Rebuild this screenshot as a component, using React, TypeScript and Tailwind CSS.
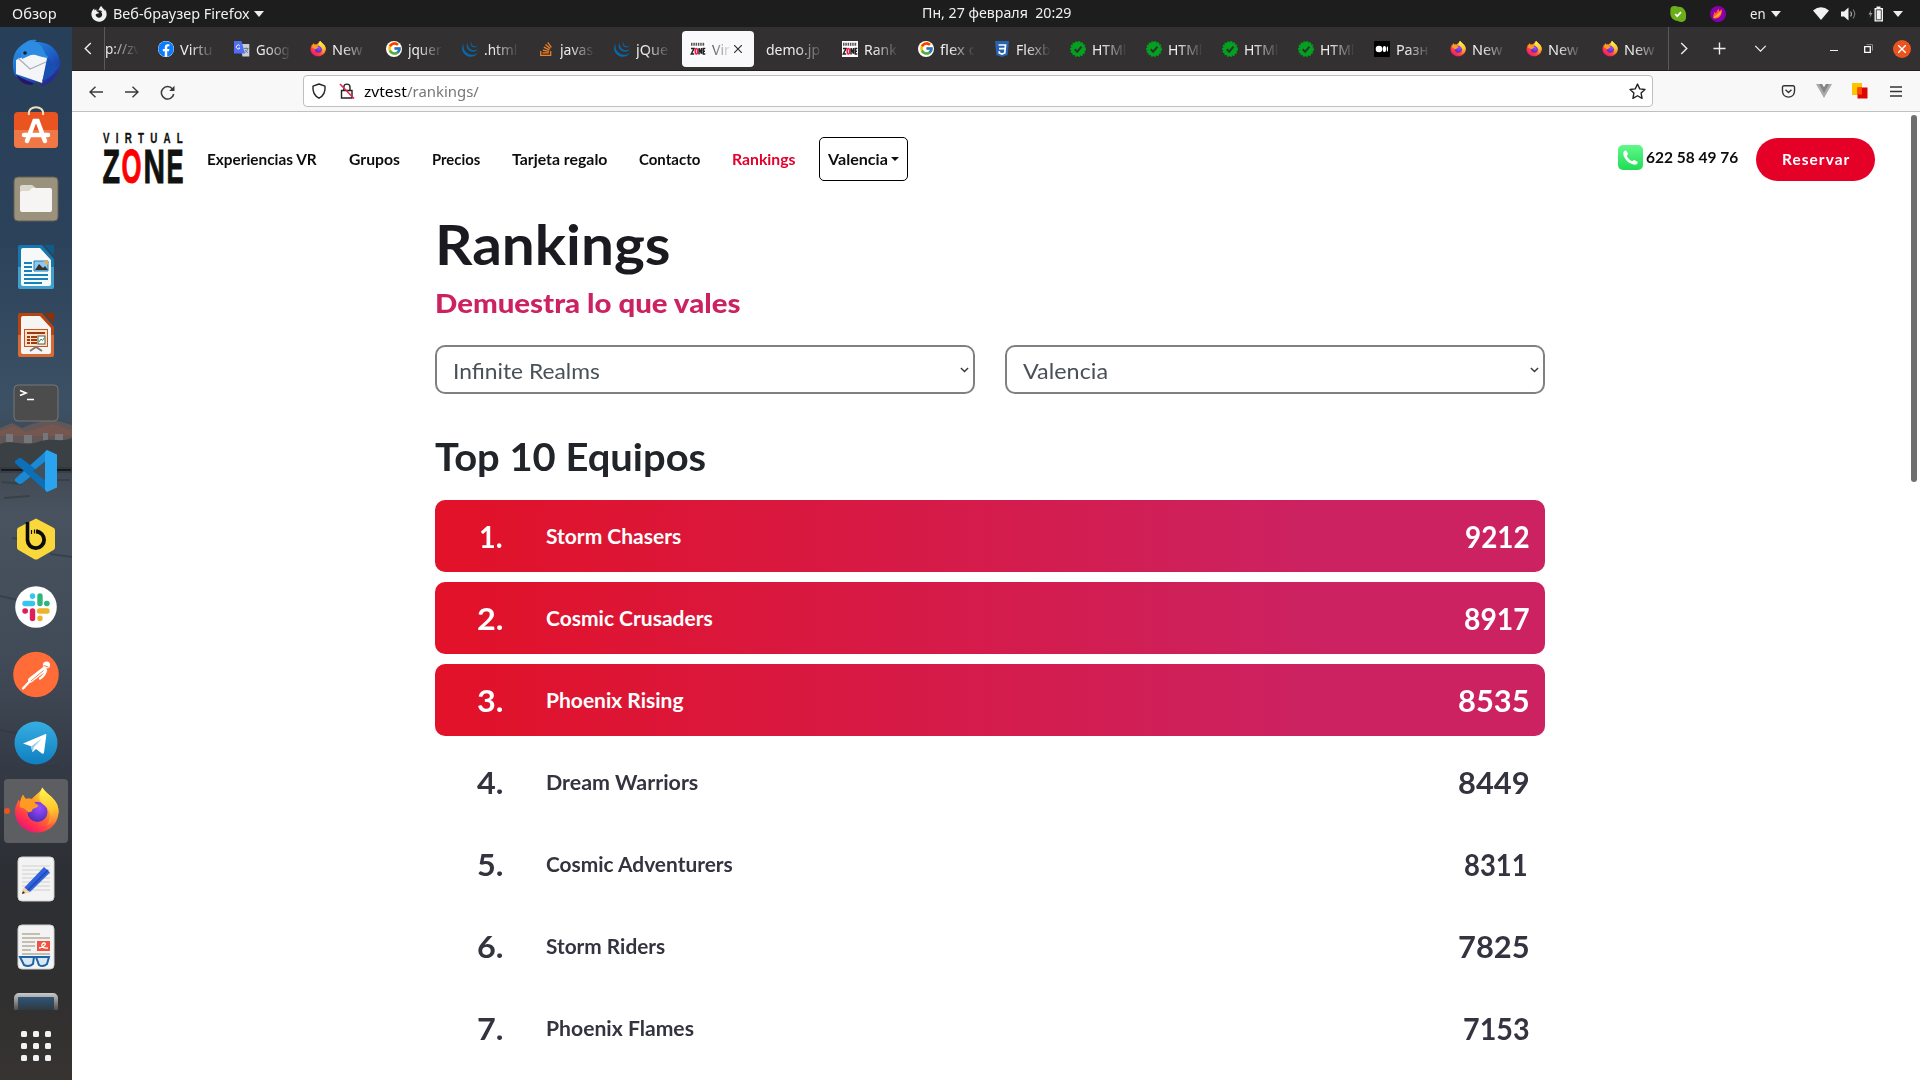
import React, { useLayoutEffect, useRef, useState } from "react";
import { FcGoogle } from "react-icons/fc";
import { FaFacebook, FaStackOverflow, FaFirefoxBrowser } from "react-icons/fa";
import { SiJquery } from "react-icons/si";

/** Text stretched horizontally so that it fills a given width. */
function Fit({ w, children, className = "" }: { w: number; children: React.ReactNode; className?: string }) {
  const ref = useRef<HTMLSpanElement>(null);
  const [k, setK] = useState(1);
  useLayoutEffect(() => {
    if (ref.current) setK(w / ref.current.offsetWidth);
  }, [w]);
  return (
    <span className={"inline-block shrink-0 whitespace-pre " + className} style={{ width: w }}>
      <span ref={ref} className="inline-block origin-left" style={{ transform: `scaleX(${k})` }}>
        {children}
      </span>
    </span>
  );
}

function Firefox({ className, id }: { className: string; id: string }) {
  return (
    <svg viewBox="0 0 48 48" className={className}>
      <defs>
        <linearGradient id={id + "a"} x1="0.85" y1="0.05" x2="0.2" y2="0.95">
          <stop offset="0" stopColor="#fff44f" />
          <stop offset="0.3" stopColor="#ffb42c" />
          <stop offset="0.55" stopColor="#ff6a2f" />
          <stop offset="0.8" stopColor="#ff2f50" />
          <stop offset="1" stopColor="#e5157a" />
        </linearGradient>
        <radialGradient id={id + "b"} cx="0.6" cy="0.3" r="0.75">
          <stop offset="0" stopColor="#9a4dff" />
          <stop offset="1" stopColor="#4a2bb8" />
        </radialGradient>
        <linearGradient id={id + "c"} x1="0.5" y1="0" x2="0.6" y2="1">
          <stop offset="0" stopColor="#fff44f" />
          <stop offset="0.6" stopColor="#ffc52e" />
          <stop offset="1" stopColor="#ff7139" />
        </linearGradient>
      </defs>
      <path d="M10 8c1 2 1.500 3 3 4.500 2-.5 4-.5 6 0C23 8 28 6 30 .5c2 3 4 5 7 7.500 6 5 10 10 10 17.500C47 38 37 47.500 24.500 47.500S1.500 38 1.500 25.500c0-3 .8-6 2-8 .5-2 1-3 2-4.500l1 3c1-3 2-6 3.500-8z" fill={`url(#${id}a)`} />
      <circle cx="25" cy="26" r="10.500" fill={`url(#${id}b)`} />
      <path d="M30 .5c2 3 4 5 7 7.500 6 5 10 10 10 17.500C46 34 40 39 35 40c3-5 4.500-13 0-18-3-4-8-5-8-11 0-4 2-7 3-10.500z" fill={`url(#${id}c)`} />
      <path d="M10 8c1 2 1.500 3 3 4.500 4-1 8 1 9.500 4.500 1.500 1 3 1.500 3.500 2.500-1 2-4 2.500-6 3.500 0 2-2 3.500-4.500 3.500-3-3-5-5-9-5 0-5 1-10 3.500-13.500z" fill="#ff9a23" />
    </svg>
  );
}

function ZoneFavicon() {
  return (
    <svg viewBox="0 0 16 16" className="size-4">
      <rect width="16" height="16" fill="#fff" />
      <path d="M1 2.500h14M1 4h14" stroke="#555" strokeWidth="1.300" strokeDasharray="1.500 .8" />
      <path d="M1 7.500h3L1.300 13h2.900M9 13.500V7.200l2.500 5.500V7M15.300 7.500h-2v5.500h2M13.500 10.200h1.500" stroke="#222" strokeWidth="1.500" fill="none" />
      <ellipse cx="6.400" cy="10.200" rx="1.200" ry="2.800" fill="none" stroke="#f0184a" strokeWidth="1.500" />
    </svg>
  );
}

function Check() {
  return (
    <svg viewBox="0 0 16 16" className="size-4">
      <circle cx="8" cy="8" r="7" fill="#04a01f" stroke="#04a01f" strokeWidth="1.800" strokeDasharray="2 1" />
      <path d="M4.700 8.300l2.500 2.400 4.300-5" stroke="#2b332c" strokeWidth="2" fill="none" />
    </svg>
  );
}

function Css3() {
  return (
    <svg viewBox="0 0 14 16" className="h-4 w-[14px]">
      <path d="M0 0h14l-1.300 14L7 16l-5.700-2z" fill="#2763b0" />
      <path d="M3.500 4h7l-.7 8L7 13l-2.700-1-.1-1.700M4 7.700h6" stroke="#fff" strokeWidth="1.700" fill="none" />
    </svg>
  );
}

function Translate() {
  return (
    <svg viewBox="0 0 16 16" className="size-4">
      <path d="M6 3h9.300v12.500H8.500z" fill="#c9cdd6" />
      <path d="M0 0h7.500L11 12.500H0z" fill="#4f6ef5" />
      <path d="M5.800 4.700A2 2 0 1 0 6 7H4.500" stroke="#fff" fill="none" strokeWidth=".9" />
      <path d="M10 7.500h4.500M12.200 6.500v1M13.700 7.700c-.5 2-1.700 3.300-3 4M11 9c.8 1.200 2 2 3 2.700" stroke="#64748b" fill="none" strokeWidth=".9" />
    </svg>
  );
}

function Medium() {
  return (
    <svg viewBox="0 0 16 16" className="size-4">
      <rect width="16" height="16" rx="1" fill="#000" />
      <circle cx="5" cy="8" r="3.300" fill="#fff" />
      <ellipse cx="10.400" cy="8" rx="1.700" ry="3.100" fill="#fff" />
      <ellipse cx="13.400" cy="8" rx=".7" ry="2.800" fill="#fff" />
    </svg>
  );
}

const jq = <SiJquery className="size-4 text-[#0769ad]" />;
const gg = (
  <span className="flex size-4 items-center justify-center rounded-full bg-white">
    <FcGoogle className="size-[15px]" />
  </span>
);

const tabs: { icon?: React.ReactNode; text: string; w: number; active?: boolean }[] = [
  { icon: <FaFacebook className="size-4 rounded-full bg-white text-[#0a7cff]" />, text: "Virtu", w: 33 },
  { icon: <Translate />, text: "Goog", w: 34 },
  { icon: <Firefox className="size-[17px]" id="t1" />, text: "New", w: 30 },
  { icon: gg, text: "jquer", w: 34 },
  { icon: jq, text: ".html", w: 33 },
  { icon: <FaStackOverflow className="size-4 text-[#f48024]" />, text: "javas", w: 33 },
  { icon: jq, text: "jQue", w: 32 },
  { icon: <ZoneFavicon />, text: "Vir", w: 18, active: true },
  { text: "demo.jp", w: 54 },
  { icon: <ZoneFavicon />, text: "Rank", w: 33 },
  { icon: gg, text: "flex c", w: 36 },
  { icon: <Css3 />, text: "Flexb", w: 35 },
  { icon: <Check />, text: "HTMl", w: 34 },
  { icon: <Check />, text: "HTMl", w: 34 },
  { icon: <Check />, text: "HTMl", w: 34 },
  { icon: <Check />, text: "HTMl", w: 34 },
  { icon: <Medium />, text: "Разн", w: 32 },
  { icon: <Firefox className="size-[17px]" id="t2" />, text: "New", w: 30 },
  { icon: <Firefox className="size-[17px]" id="t3" />, text: "New", w: 30 },
  { icon: <Firefox className="size-[17px]" id="t4" />, text: "New", w: 30 },
];

function Caret() {
  return (
    <svg viewBox="0 0 10 6" className="h-[6px] w-[10px] shrink-0">
      <path d="M0 0h10L5 6z" fill="#eee" />
    </svg>
  );
}

function TopBar() {
  return (
    <div className="flex h-[27px] shrink-0 items-center bg-[#1d1d1d] text-[14px] leading-[26px] text-[#f0f0f0]">
      <Fit w={45} className="ml-[12px]">Обзор</Fit>
      <FaFirefoxBrowser className="ml-[34px] size-4" />
      <Fit w={137} className="ml-[6px]">Веб-браузер Firefox</Fit>
      <span className="ml-[4px]"><Caret /></span>
      <Fit w={150} className="-mt-px ml-[658px]">Пн, 27 февраля  20:29</Fit>
      <svg viewBox="0 0 16 16" className="ml-[598px] size-4">
        <path d="M4.500 0C1 0 0 2 .5 5c-1 6 2.500 9.500 7.500 10C11 17 16 16 16 11.500 17 5 13 0 8 .8 7 .2 6 0 4.500 0z" fill="#6aae1a" />
        <path d="M5.200 8l2 2.200 3.800-4" stroke="#fff" strokeWidth="1.700" fill="none" />
      </svg>
      <svg viewBox="0 0 16 16" className="ml-[24px] size-4">
        <circle cx="8" cy="8" r="8" fill="#8a00a8" />
        <path d="M3 12c0-3 1-4 1.500-6.500l1.500 2C6.500 5.500 7.500 4 9 2.800v2.500l3-2c0 3.500-.5 6.200-2.500 7.700S5 13 3 12z" fill="#ff5a3c" />
        <path d="M4 12c1-3 3-3 4.500-5L11 5c.5 3-2 6-7 7z" fill="#ffb01f" />
      </svg>
      <Fit w={16} className="ml-[24px]">en</Fit>
      <span className="ml-[5px]"><Caret /></span>
      <svg viewBox="0 0 16 13" className="ml-[32px] h-[13px] w-4">
        <path d="M0 3.500Q8-3 16 3.500L8 13z" fill="#f2f2f2" />
      </svg>
      <svg viewBox="0 0 16 14" className="ml-[12px] h-[14px] w-4 shrink-0">
        <path d="M0 4.500h3L7.500.5v13L3 9.500H0z" fill="#f2f2f2" />
        <path d="M9.500 4.500q2 2.500 0 5" stroke="#aaa" fill="none" strokeWidth="1.200" />
        <path d="M12 2.500q3.500 4.500 0 9" stroke="#777" fill="none" strokeWidth="1.200" />
      </svg>
      <svg viewBox="0 0 16 16" className="ml-[11px] size-4 shrink-0">
        <path d="M3 4L.5 8.500h2L1.500 12l3-5h-2z" fill="#999" />
        <path d="M8.500 2V.5h4V2h2.500v13.500H6.500V2z" fill="#f2f2f2" />
        <path d="M8.300 3.800h5v10h-5z" fill="#f2f2f2" stroke="#1d1d1d" strokeWidth=".8" />
      </svg>
      <span className="ml-[9px]"><Caret /></span>
    </div>
  );
}

function TabStrip() {
  return (
    <div className="flex h-[44px] shrink-0 items-center border-b border-[#221f20] bg-[#333031] text-[14px] text-[#ededed]">
      <div className="flex h-full w-[33px] items-center border-r border-[#5c595a] pl-[12px]">
        <svg viewBox="0 0 8 14" className="h-[13px] w-[8px]"><path d="M7 1L1 7l6 6" stroke="#eee" strokeWidth="1.500" fill="none" /></svg>
      </div>
      <div className="flex w-[43px] overflow-hidden">
        <Fit w={35} className="[mask-image:linear-gradient(90deg,#000_5px,transparent_34px)]">p://zv</Fit>
      </div>
      {tabs.map((t, i) => (
        <div
          key={i}
          className={
            "mx-[2px] flex h-[36px] w-[72px] shrink-0 items-center overflow-hidden rounded-[4px] pl-[8px] " +
            (t.active ? "bg-[#f9f9fb] text-[#555]" : "")
          }
        >
          {t.icon && <span className="mr-[6px] flex w-4 shrink-0 justify-center">{t.icon}</span>}
          <Fit
            w={t.w}
            className={
              "pt-px " +
              (t.active
                ? "[mask-image:linear-gradient(90deg,#000_0px,transparent_20px)]"
                : t.icon
                ? "[mask-image:linear-gradient(90deg,#000_10px,transparent_35px)]"
                : "[mask-image:linear-gradient(90deg,#000_30px,transparent_58px)]")
            }
          >
            {t.text}
          </Fit>
          {t.active && (
            <svg viewBox="0 0 8 8" className="ml-[4px] size-[8px] shrink-0"><path d="M0 0l8 8M8 0L0 8" stroke="#333" strokeWidth="1.200" /></svg>
          )}
        </div>
      ))}
      <div className="flex h-full flex-1 items-center border-l border-[#5c595a] pl-[11px]">
        <svg viewBox="0 0 8 14" className="h-[13px] w-[8px]"><path d="M1 1l6 6-6 6" stroke="#eee" strokeWidth="1.500" fill="none" /></svg>
        <svg viewBox="0 0 14 14" className="ml-[25px] size-[13px]"><path d="M7 .5v13M.5 7h13" stroke="#eee" strokeWidth="1.500" fill="none" /></svg>
        <svg viewBox="0 0 14 8" className="ml-[28px] h-[7px] w-[13px]"><path d="M1 1l6 6 6-6" stroke="#eee" strokeWidth="1.500" fill="none" /></svg>
        <span className="mt-[4px] ml-[63px] h-[1.500px] w-[8px] bg-[#eee]" />
        <svg viewBox="0 0 9 9" className="ml-[26px] size-[9px]">
          <path d="M.7 2.700h5.600v5.600H.7z" stroke="#fff" strokeWidth="1.300" fill="none" />
          <path d="M2.500.6h6v6" stroke="#888" fill="none" />
        </svg>
        <span className="ml-[20px] flex size-[18px] items-center justify-center rounded-full bg-[#e95420]">
          <svg viewBox="0 0 8 8" className="size-[8px]"><path d="M0 0l8 8M8 0L0 8" stroke="#fff" strokeWidth="1.400" /></svg>
        </span>
      </div>
    </div>
  );
}

function Toolbar() {
  return (
    <div className="flex h-[41px] shrink-0 items-center border-b border-[#c0c0c0] bg-[#f8f8f8] pl-[17px]">
      <svg viewBox="0 0 14 12" className="mt-px h-[12px] w-[14px]"><path d="M14 6H1M6.500.7L1 6l5.500 5.300" stroke="#3a3a3a" strokeWidth="1.400" fill="none" /></svg>
      <svg viewBox="0 0 14 12" className="mt-px ml-[22px] h-[12px] w-[14px]"><path d="M0 6h13M7.500.7L13 6l-5.500 5.300" stroke="#3a3a3a" strokeWidth="1.400" fill="none" /></svg>
      <svg viewBox="0 0 15 15" className="mt-[2px] ml-[21px] size-[15px]">
        <path d="M12.500 4A6.200 6.200 0 1 0 13.700 9" stroke="#3a3a3a" strokeWidth="1.500" fill="none" />
        <path d="M14.500.8v5.200H9.200z" fill="#3a3a3a" />
      </svg>
      <div className="ml-[128px] flex h-[32px] w-[1350px] items-center rounded-[4px] border border-[#bfbfc0] bg-white pl-[7px] text-[14.500px]">
        <svg viewBox="0 0 16 16" className="size-4"><path d="M8 1l6 2.200c.5 5-1 9.300-6 12-5-2.700-6.500-7-6-12z" stroke="#222" strokeWidth="1.400" fill="none" strokeLinejoin="round" /></svg>
        <svg viewBox="0 0 16 16" className="ml-[12px] size-4">
          <path d="M2.500 7.500h10.500v7.500h-10.500zM4.800 7.500V4.200a3.100 3.100 0 0 1 6.200 0v3.300" stroke="#222" strokeWidth="1.400" fill="none" />
          <path d="M1 1l14 14.500" stroke="#e22850" strokeWidth="1.600" />
        </svg>
        <Fit w={43} className="ml-[9px] pt-[2px] text-black">zvtest</Fit>
        <Fit w={72} className="pt-[2px] text-[#777]">/rankings/</Fit>
        <svg viewBox="0 0 16 16" className="mr-[6px] ml-auto size-[17px]"><path d="M8 1l2.100 4.500 4.900.6-3.600 3.400.9 4.900L8 12l-4.300 2.400.9-4.900L1 6.100l4.900-.6z" stroke="#222" strokeWidth="1.300" fill="none" strokeLinejoin="round" /></svg>
      </div>
      <svg viewBox="0 0 15 14" className="ml-[128px] h-[13px] w-[15px]">
        <path d="M2.500.8h10a1.500 1.500 0 0 1 1.500 1.500v4c0 9-13 9-13 0v-4A1.500 1.500 0 0 1 2.500.8z" stroke="#333" strokeWidth="1.500" fill="none" />
        <path d="M4.300 5l3.200 3 3.200-3" stroke="#333" strokeWidth="1.500" fill="none" />
      </svg>
      <svg viewBox="0 0 16 14" className="ml-[20px] h-[14px] w-4"><path d="M0 0h6l2 3.500L10 0h6L8 14z" fill="#aaa" /><path d="M3 0h3l2 3.500L10 0h3L8 9z" fill="#848484" /></svg>
      <svg viewBox="0 0 16 16" className="ml-[20px] size-4"><rect width="10" height="12" fill="#ffc400" /><rect x="5.500" y="4.500" width="10" height="11" fill="#dc0606" /><rect x="5.500" y="4.500" width="4.500" height="7" fill="#ff4a00" /></svg>
      <svg viewBox="0 0 12 11" className="ml-[22px] h-[11px] w-[12px]"><path d="M0 1h12M0 5.500h12M0 10h12" stroke="#333" strokeWidth="1.500" /></svg>
    </div>
  );
}

const dock: React.ReactNode[] = [
  // Mail
  <svg viewBox="0 0 48 48" className="size-12">
    <defs>
      <linearGradient id="tb" x1="0" y1="0" x2=".8" y2="1"><stop offset="0" stopColor="#2a9bec" /><stop offset=".6" stopColor="#1b5fc6" /><stop offset="1" stopColor="#2d1a86" /></linearGradient>
    </defs>
    <path d="M2 34C-2 18 5 8 12 5c3-4 8-5 13-4l-2 2c14-1 24 8 25 20 0 12-8 22-20 25l4-5-10 1C14 44 6 42 2 34z" fill="url(#tb)" />
    <path d="M4 21l11-5 16-1 4 4-5 25-26-9z" fill="#f4f5f7" />
    <path d="M6 19l12 11 16-7" stroke="#a9b0bc" strokeWidth="1.300" fill="none" />
    <path d="M11 5c8-5 15-3 19 3 3 6 3 8 8 11-5 0-12-2-17-4l-11 5c-2-6-2-11 1-15z" fill="#2d8be2" />
    <path d="M37 17c-3 10-3 17-7 25 7-2 15-9 18-18l-5 4 3-8-7 6z" fill="#1750b0" />
    <circle cx="13" cy="14" r="1.800" fill="#15202f" />
    <path d="M4 36l12 6 6 2-2 2c-8 0-13-4-16-10z" fill="#2a1468" />
  </svg>,
  // Software centre
  <svg viewBox="0 0 48 48" className="size-12 overflow-visible">
    <rect x="2" y="5" width="44" height="36" rx="4" fill="#e95420" />
    <path d="M2 23h44v14a4 4 0 0 1-4 4H6a4 4 0 0 1-4-4z" fill="#f07746" />
    <path d="M15 34l7.500-20h3L33 34" stroke="#fff" strokeWidth="4.500" strokeLinecap="round" fill="none" />
    <path d="M12 28h24" stroke="#fff" strokeWidth="4.500" strokeLinecap="round" />
    <path d="M17 8C15-2.500 33-2.500 31 8" stroke="#efe0bb" strokeWidth="2" fill="none" />
  </svg>,
  // Files
  <svg viewBox="0 0 48 48" className="size-12">
    <rect x="2" y="2" width="44" height="44" rx="4" fill="#9b927e" stroke="#655f51" />
    <path d="M8 12a2 2 0 0 1 2-2h10l4 3h6v8H8z" fill="#dcd7cb" />
    <path d="M8 18a2 2 0 0 1 2-2h7l3-3h18a2 2 0 0 1 2 2v20a2 2 0 0 1-2 2H10a2 2 0 0 1-2-2z" fill="#f6f5f3" />
  </svg>,
  // Writer
  <svg viewBox="0 0 48 48" className="size-12">
    <path d="M8 2h22l12 14v28a2 2 0 0 1-2 2H8a2 2 0 0 1-2-2V4a2 2 0 0 1 2-2z" fill="#1478ae" />
    <path d="M6 24h36v20a2 2 0 0 1-2 2H8a2 2 0 0 1-2-2z" fill="#3fa0cf" />
    <path d="M11 5h17l11 12v24a2 2 0 0 1-2 2H11a2 2 0 0 1-2-2V7a2 2 0 0 1 2-2z" fill="#f7f8f8" />
    <path d="M32 2h10v10z" fill="#0b5d8d" />
    <path d="M12 20h8M12 24h8M12 28h8M12 32h24M12 36h24M12 40h18" stroke="#1682bb" strokeWidth="2" />
    <path d="M22 18h14v10H22z" fill="#8ec9ec" stroke="#1682bb" /><path d="M23 27l4-6 4 4 2-2 3 4z" fill="#333" /><path d="M31 18h5v4z" fill="#fba63c" />
  </svg>,
  // Impress
  <svg viewBox="0 0 48 48" className="size-12">
    <path d="M8 2h22l12 14v28a2 2 0 0 1-2 2H8a2 2 0 0 1-2-2V4a2 2 0 0 1 2-2z" fill="#b7430f" />
    <path d="M6 24h36v20a2 2 0 0 1-2 2H8a2 2 0 0 1-2-2z" fill="#d96a33" />
    <path d="M11 5h17l11 12v24a2 2 0 0 1-2 2H11a2 2 0 0 1-2-2V7a2 2 0 0 1 2-2z" fill="#f7f5f3" />
    <path d="M32 2h10v10z" fill="#8f2f06" />
    <rect x="12.500" y="18.500" width="23" height="17" fill="#fbe0ca" stroke="#c4561f" />
    <path d="M15 22h18M15 26h3M15 29h3M15 32h3M19 26h6M19 29h6M19 32h6" stroke="#a03a0c" strokeWidth="1.800" />
    <rect x="26" y="25" width="7" height="8" fill="#fff" stroke="#555" /><path d="M27 31l2-3 1.500 1.500 2-3" stroke="#2a9a3a" fill="none" />
    <path d="M18 40l6-4 6 4" stroke="#777" strokeWidth="2" fill="none" />
  </svg>,
  // Terminal
  <svg viewBox="0 0 48 48" className="size-12">
    <rect x="2" y="6" width="44" height="36" rx="4" fill="#4c4c4c" stroke="#777" />
    <path d="M8 11.500l6 2.500-6 2.500M15 20.500h7" stroke="#fff" strokeWidth="1.600" fill="none" />
  </svg>,
  // Code editor
  <svg viewBox="0 0 48 48" className="size-12">
    <path d="M35 3L3 32v2l4 3h2L39 14z" fill="#1a8ad4" />
    <path d="M35 45L3 16v-2l4-3h2l30 23z" fill="#0d6fb8" />
    <path d="M35 3l10 4.500v33L35 45l-2-2V5z" fill="#2ba4f0" />
    <path d="M33 14.500L21 24l12 9.500z" fill="#42505c" />
  </svg>,
  // Database client
  <svg viewBox="0 0 48 48" className="size-12">
    <path d="M24 3.500l17 9a3 3 0 0 1 2 2.500v17.500a3 3 0 0 1-1.500 2.500L26 44a4 4 0 0 1-4 0L6.500 35A3 3 0 0 1 5 32.500V15a3 3 0 0 1 1.500-2.500z" fill="#fad83b" />
    <path d="M15.500 7v18" stroke="#0c0c0c" strokeWidth="3.600" />
    <path d="M24 16.500a8.300 8.300 0 1 1-8.500 8.500" stroke="#0c0c0c" strokeWidth="3.800" fill="none" />
    <path d="M19.500 15v4M22.500 14.500v4M25.500 14.500v3" stroke="#0c0c0c" strokeWidth="1.200" />
  </svg>,
  // Slack
  <svg viewBox="0 0 48 48" className="size-12">
    <circle cx="24" cy="24" r="20.800" fill="#fff" />
    <g strokeWidth="5.400" strokeLinecap="round" fill="none">
      <path d="M13 20.500h7.500M20.500 13v.3" stroke="#36c5f0" /><path d="M28 13v7.500M35 20.500h-.3" stroke="#2eb67d" />
      <path d="M35 28h-7.500M28 35.500v-.3" stroke="#ecb22e" /><path d="M20.500 35.500V28M13 28h.3" stroke="#e01e5a" />
    </g>
  </svg>,
  // Postman
  <svg viewBox="0 0 48 48" className="size-12">
    <circle cx="24" cy="23.500" r="22.800" fill="#ff6c37" />
    <circle cx="34.500" cy="14" r="3.600" fill="#fff" />
    <path d="M32 18.500L18.500 29" stroke="#fff" strokeWidth="5" strokeLinecap="round" />
    <path d="M19 29l-8 8.500M34 19.500c-1 4-3 6-6 8" stroke="#fff" strokeWidth="2.400" fill="none" strokeLinecap="round" />
    <path d="M31.500 19.500L19 30M31.500 14.500l5 1.500" stroke="#ff6c37" strokeWidth=".9" />
  </svg>,
  // Telegram
  <svg viewBox="0 0 48 48" className="size-12">
    <defs><linearGradient id="tg" x1="0" y1="0" x2="0" y2="1"><stop offset="0" stopColor="#37aee2" /><stop offset="1" stopColor="#0f7fc0" /></linearGradient></defs>
    <circle cx="24" cy="24" r="21.500" fill="url(#tg)" />
    <path d="M11 24.500L33 15.200c1-.3 1.600.3 1.300 1.400L32 33.500c-.3 1.200-1.200 1.500-2 1l-6-4.500-3.500 3.200-1.500-6z" fill="#fff" />
    <path d="M19 27.500l11-8-8 8.500-1.500 5z" fill="#9ccbe6" />
  </svg>,
  // Browser
  <Firefox className="mb-[2px] h-[46px] w-[47px]" id="dk" />,
  // Text editor
  <svg viewBox="0 0 48 48" className="size-12">
    <rect x="6" y="2" width="36" height="44" rx="4" fill="#f3f3f3" stroke="#d0d0d0" />
    <path d="M10 11h28M10 15h28M10 19h28M10 23h28M10 27h28M10 31h28M10 35h28" stroke="#cfcfcf" />
    <path d="M12 33L32 12l6 5.500L18 37z" fill="#2f62dc" /><path d="M15.500 35.500L36 15" stroke="#1d47b4" strokeWidth="1.500" />
    <path d="M12 32l6 5.500L9.500 39z" fill="#f6cfa4" /><path d="M11 36l2 2-3 1z" fill="#222" />
  </svg>,
  // Document viewer
  <svg viewBox="0 0 48 48" className="size-12">
    <rect x="6" y="2" width="36" height="44" rx="4" fill="#f3f3f3" stroke="#d0d0d0" />
    <path d="M10 11h18M10 15h28M10 19h13M10 23h13M10 27h9M10 31h28" stroke="#b5ad9c" strokeWidth="1.700" />
    <rect x="25" y="18" width="13" height="10" fill="#f0523f" /><path d="M27 25c6-1 8-5 5-5s-4 6 4 5" stroke="#fff" fill="none" strokeWidth="1.300" />
    <path d="M8 34h14l-1 7q-4 3.500-9 1zM24 34h13l-2 7q-4 3.500-8 1z" fill="#dce6ee" stroke="#1c65a8" strokeWidth="2" />
  </svg>,
];

function Dock() {
  return (
    <div className="relative flex w-[72px] shrink-0 flex-col items-center overflow-hidden bg-[linear-gradient(180deg,#283f59_0%,#2c425b_20%,#3c5164_36%,#40464f_41%,#48535f_46%,#414b58_60%,#353b46_70%,#2c2f34_80%,#302f2f_92%,#373432_100%)]">
      <svg viewBox="0 0 72 400" className="absolute top-[393px] left-0 h-[400px] w-[72px]">
        <path d="M0 8l12-5 10 5 10-4 18-5 22 6v26H0z" fill="#625757" />
        <path d="M0 11l14-5 12 6 26-8 20 6v6H0z" fill="#75574f" />
        <path d="M6 14h7v8H6zM24 15h8v8h-8zM43 13h5v9h-5zM55 14h8v8h-8z" fill="#77767a" />
        <path d="M0 24c12-5 24 3 38-2s22 1 34-4v32H0z" fill="#3a4044" />
        <path d="M0 48h72v4H0zM2 62l20 2M50 60h20M4 78l26-2M12 118l28 4M50 134l22 3M0 176l18 4M0 310l40 8M30 345l28 2" stroke="#303840" strokeWidth="2" opacity=".6" />
      </svg>
      <div className="relative flex flex-col items-center gap-[4px] pt-[4px]">
        {dock.map((d, i) => (
          <div key={i} className={"relative flex size-[64px] items-center justify-center rounded-[4px] " + (i === 11 ? "bg-[#5d5e62]" : "")}>
            {i === 11 && <span className="absolute top-[29px] left-0 size-[6px] rounded-full bg-[#e95420]" />}
            {d}
          </div>
        ))}
      </div>
      <div className="relative mt-[14px] h-[17px] w-[44px] overflow-hidden">
        <div className="h-[40px] rounded-[5px] border-[4px] border-[#c9c9c9] bg-[#2e5f88]" />
        <div className="absolute inset-0 bg-linear-to-b from-transparent to-[#302f2f]/80" />
      </div>
      <div className="relative mt-[21px] grid grid-cols-3 gap-[6px]">
        {Array.from({ length: 9 }, (_, i) => (
          <span key={i} className="size-[6px] rounded-[1.500px] bg-[#f2f2f2]" />
        ))}
      </div>
    </div>
  );
}

function Logo() {
  return (
    <svg viewBox="0 0 80 52" className="h-[52px] w-[80px] shrink-0 overflow-visible" fontFamily="Liberation Sans" fontWeight="bold" fill="#11110f">
      <text x="0" y="10.200" fontSize="14" textLength="114" transform="scale(.7 1)" stroke="#11110f" strokeWidth=".3">VIRTUAL</text>
      <g fontSize="49" stroke="#11110f" strokeWidth="1">
        <text x="-.5" y="50" textLength="17.500" lengthAdjust="spacingAndGlyphs">Z</text>
        <text x="18.500" y="50" textLength="20" lengthAdjust="spacingAndGlyphs" fill="#ff0000" stroke="#ff0000">O</text>
        <text x="40.500" y="50" textLength="21.500" lengthAdjust="spacingAndGlyphs">N</text>
        <text x="63.500" y="50" textLength="17" lengthAdjust="spacingAndGlyphs">E</text>
      </g>
    </svg>
  );
}

function SiteHeader() {
  return (
    <header className="flex h-[94px] items-center pl-[31px] font-[Lato,sans-serif] text-[14.500px] leading-[20px] font-bold text-[#0d0d0d]">
      <Logo />
      <nav className="flex items-center">
        <Fit w={110} className="mt-px ml-[24px]">Experiencias VR</Fit>
        <Fit w={51} className="mt-px ml-[32px]">Grupos</Fit>
        <Fit w={48} className="mt-px ml-[32px]">Precios</Fit>
        <Fit w={95} className="mt-px ml-[32px]">Tarjeta regalo</Fit>
        <Fit w={61} className="mt-px ml-[32px]">Contacto</Fit>
        <Fit w={63} className="mt-px ml-[32px] text-[#e4002b]">Rankings</Fit>
        <div className="ml-[24px] flex h-[44px] w-[89px] items-center rounded-[5px] border border-black pl-[8px]">
          <Fit w={60} className="pt-[2px]">Valencia</Fit>
          <svg viewBox="0 0 8 4" className="mb-[1px] ml-[3px] h-[4px] w-[8px]"><path d="M0 0h8L4 4z" fill="#0d0d0d" /></svg>
        </div>
      </nav>
      <div className="mr-[45px] ml-auto flex items-center">
        <svg viewBox="0 0 25 25" className="mb-[3px] size-[25px]">
          <defs><linearGradient id="ph" x1="0" y1="0" x2="0" y2="1"><stop offset="0" stopColor="#5ff98a" /><stop offset="1" stopColor="#20dc55" /></linearGradient></defs>
          <rect width="25" height="25" rx="5" fill="url(#ph)" />
          <path d="M5.500 7c1-2 2.500-2 3.200-.8l1.200 2c.5 1-.8 1.800-1 2.500 0 1.500 4 5.500 5.500 5.300.8-.2 1.500-1.400 2.500-.8l2.200 1.400c1 .8.800 2-.9 3C11 20.500 4 12 5.500 7z" fill="#fff" />
        </svg>
        <Fit w={92} className="mb-[5px] ml-[3px] text-[15px]">622 58 49 76</Fit>
        <div className="mt-px ml-[18px] flex h-[43px] w-[119px] items-center justify-center rounded-full bg-[#e50027] text-white">
          <Fit w={68} className="tracking-[1px]">Reservar</Fit>
        </div>
      </div>
    </header>
  );
}

function Select({ label, w }: { label: string; w: number }) {
  return (
    <div className="flex h-[49px] w-[540px] items-center justify-between rounded-[10px] border-2 border-[#808080] pr-[4px] pl-[16px] text-[22px] text-[#495057]">
      <Fit w={w} className="pt-[2px]">{label}</Fit>
      <svg viewBox="0 0 10 6" className="h-[6px] w-[9px]"><path d="M1 .7l4 4 4-4" stroke="#333a40" strokeWidth="1.600" fill="none" /></svg>
    </div>
  );
}

const teams = [
  { name: "Storm Chasers", w: 135, score: "9212", sw: 65 },
  { name: "Cosmic Crusaders", w: 167, score: "8917", sw: 66 },
  { name: "Phoenix Rising", w: 138, score: "8535", sw: 72 },
  { name: "Dream Warriors", w: 152, score: "8449", sw: 72 },
  { name: "Cosmic Adventurers", w: 187, score: "8311", sw: 64 },
  { name: "Storm Riders", w: 119, score: "7825", sw: 72 },
  { name: "Phoenix Flames", w: 148, score: "7153", sw: 67 },
];

export default function App() {
  return (
    <div className="flex h-[1080px] w-[1920px] flex-col overflow-hidden bg-white font-['Noto_Sans',sans-serif]">
      <TopBar />
      <div className="flex min-h-0 flex-1">
        <Dock />
        <div className="flex min-w-0 flex-1 flex-col">
          <TabStrip />
          <Toolbar />
          <div className="relative min-h-0 flex-1 overflow-hidden">
            <div className="absolute top-[3px] right-[3px] h-[367px] w-[6px] rounded-full bg-[#6f6f6f]" />
            <SiteHeader />
            <main className="ml-[363px] w-[1110px] pt-[10px] font-[Lato,sans-serif]">
              <h1 className="text-[56px] leading-[55px] font-bold text-[#1a1a20]"><Fit w={236}>Rankings</Fit></h1>
              <h2 className="mt-[19px] text-[26px] leading-[26px] font-black text-[#cc2262]"><Fit w={305}>Demuestra lo que vales</Fit></h2>
              <div className="mt-[29px] flex justify-between">
                <Select label="Infinite Realms" w={147} />
                <Select label="Valencia" w={85} />
              </div>
              <h3 className="mt-[43px] text-[38px] leading-[38px] font-bold text-[#212529]"><Fit w={271}>Top 10 Equipos</Fit></h3>
              <ol className="mt-[25px] flex flex-col gap-[10px]">
                {teams.map((t, i) => (
                  <li
                    key={t.name}
                    className={
                      "flex h-[72px] items-center rounded-[10px] pr-[15px] font-bold " +
                      (i < 3 ? "bg-[linear-gradient(90deg,#e1122a_3%,#cc2262_80%)] text-white" : "text-[#343440]")
                    }
                  >
                    <span className="flex w-[111px] justify-center text-[30px]"><Fit w={i === 0 ? 24 : 27}>{`${i + 1}.`}</Fit></span>
                    <Fit w={t.w} className="text-[21px]">{t.name}</Fit>
                    <Fit w={t.sw} className={"ml-auto text-[30px] " + (t.score === "8311" ? "mr-[2px]" : "")}>{t.score}</Fit>
                  </li>
                ))}
              </ol>
            </main>
          </div>
        </div>
      </div>
    </div>
  );
}
